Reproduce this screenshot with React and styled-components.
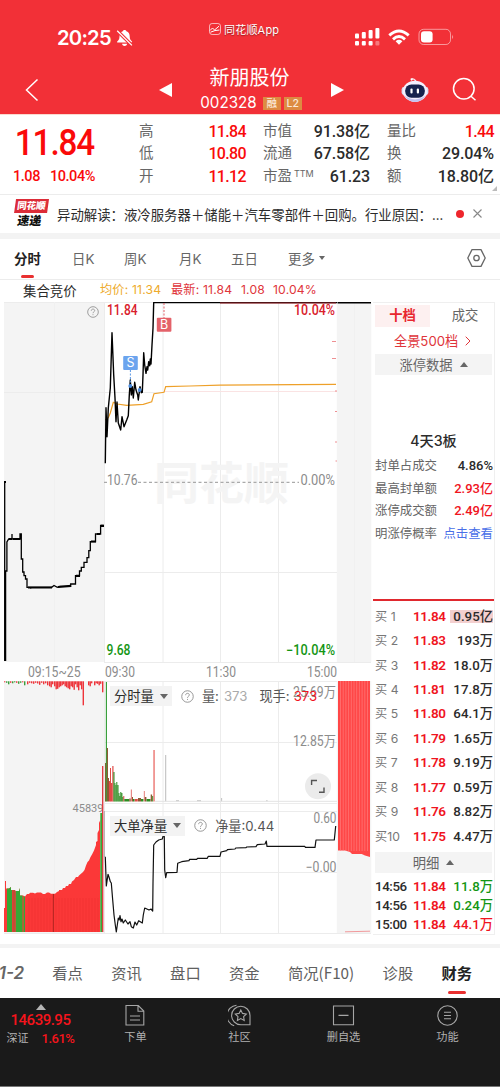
import styled, { createGlobalStyle, css } from "styled-components";

const COLORS = {
    brand: "#f23037",
    up: "#f0141e",
    down: "#149614",
    text: "#2b2b2b",
    label: "#666",
    muted: "#8c8c8c",
    panel: "#f4f4f4",
    line: "#ececec",
    dark: "#1a1a1a",
};

const UI_FONT = `Inter, "Noto Sans CJK SC", sans-serif`;
const NUM_FONT = `Roboto, "Noto Sans CJK SC", sans-serif`;

const stats = [
    [{ label: "高", value: "11.84", up: true }, { label: "低", value: "10.80", up: true }, { label: "开", value: "11.12", up: true }],
    [{ label: "市值", value: "91.38亿" }, { label: "流通", value: "67.58亿" }, { label: "市盈", sup: "TTM", value: "61.23" }],
    [{ label: "量比", value: "1.44", up: true }, { label: "换", value: "29.04%" }, { label: "额", value: "18.80亿" }],
];

const periods = [
    { label: "分时", width: 27, gap: 31, active: true },
    { label: "日K", width: 23, gap: 29 },
    { label: "周K", width: 23, gap: 32 },
    { label: "月K", width: 23, gap: 29 },
    { label: "五日", width: 27, gap: 30 },
    { label: "更多", width: 38, gap: 0, more: true },
];

const limitData = [
    { label: "封单占成交", value: "4.86%", color: COLORS.text },
    { label: "最高封单额", value: "2.93亿", color: COLORS.up },
    { label: "涨停成交额", value: "2.49亿", color: COLORS.up },
    { label: "明涨停概率", value: "点击查看", color: "#4a6fe8", link: true },
];

const bids = [
    ["11.84", "0.95亿"],
    ["11.83", "193万"],
    ["11.82", "18.0万"],
    ["11.81", "17.8万"],
    ["11.80", "64.1万"],
    ["11.79", "1.65万"],
    ["11.78", "9.19万"],
    ["11.77", "0.59万"],
    ["11.76", "8.82万"],
    ["11.75", "4.47万"],
];

const trades = [
    ["14:56", "11.84", "11.8万", COLORS.down],
    ["14:56", "11.84", "0.24万", COLORS.down],
    ["15:00", "11.84", "44.1万", COLORS.up],
];

const sections = ["看点", "资讯", "盘口", "资金", "简况(F10)", "诊股", "财务"];

/* chart series, in the coordinates of the chart's viewBox */

const auctionPrice =
    "M4.7 482V661M5.6 661V571H6.9V542L8.7 539H12V534V539H20V534H21.3V559H22.7V572H24V575.7H25.5V579H27V587.3H30.7V588.5V587.3H51.7L54 585.5L57.3 587.3L60 586.3H70.7V584H75.5V575.7H79.5V571H81.3V567.3H84V562.3H87V557.7H88.8V550.7H90.3V541.7H95.5V540.7V534H100.6V525.5H103.7";

const price =
    "105.3,463.3 106,407.7 107,436.7 108.3,408 110.3,388 112,332.7 113.7,375 115,398 116,421.7 117,402 118.3,423 120.7,430 122,416.7 124,426.7 126.7,420 128.3,415.7 129.3,395 130.3,380 131.3,395 132.3,386.7 133.3,398 134.7,382.3 136,390 137.7,395 138.3,400 140,386.7 141.3,392.7 142.3,392.3 143,375 143.7,352.7 144.7,365 146,373.3 147,366.7 147.7,370 148.7,361.7 149.7,365.7 150.3,359 151,364 152,345 153,328.3 153.7,302.6 337,302.6";

const average =
    "105.3,420 108.3,417.7 110.3,413 113.3,402.3 117.3,404 126.7,405.3 143.3,404.3 151.7,401.7 154,393.7 164,392.3 165.7,386.6 190,386 220,385.2 336,384.4";

const netLine =
    "105.3,856.7 106.3,886 108,874.3 109.3,878 110.3,881.7 111.3,883 112.7,900 114,915 115.3,925 116.3,932 117.3,925 118.3,918 119.2,920 120,915.7 121,921.7 122,919 123.3,923 125.3,920 128,924 130,921.7 131.3,926.7 133.3,928 135,922 136.7,925 138.7,920.7 142.3,923 143.3,915 144.7,908 149,910 151,909 152.7,911 153,883 153.7,845 156,842 158.7,840 162.3,839 163.7,834 164.3,836.7 164.7,870 165.7,877.7 166.7,872.7 177,872.3 177.7,863.3 181.7,861.7 189,860.7 189.5,859.4 196.7,859.3 197.5,858.3 207.3,858.3 208.3,856.3 220,856.3 221,852 226.7,850.7 227.3,849.7 235,849 235.7,848 246,847.7 246.7,847 256,846.7 257.3,844.7 265,844 266.3,841 267,846.3 304.7,846.3 305.3,847.3 315,847.3 316,840 334.3,840 335.7,826";

// [x, top, color, width]
const volumeBars = [
    [105, 763, "#8a5b30", 1],
    [105.8, 682, "#3a9f3c", 1.2],
    [106.8, 748, "#8d5a33", 1.2],
    [108, 778, "#8d5a33", 1],
    [109, 781, "#e04a46", 1.2],
    [110, 768, "#e04a46", 1],
    [111, 783, "#e04a46", 1.4],
    [112.3, 766, "#e04a46", 1.2],
    [113.4, 772, "#2c8c20", 1.1],
    [114.4, 783, "#2c8c20", 1],
    [115.4, 785, "#2c8c20", 1],
    [116.3, 782, "#2c8c20", 1],
    [117.3, 785, "#2c8c20", 1.2],
    [118.4, 793, "#2c8c20", 1],
    [119.3, 796, "#2c8c20", 1.1],
    [120.3, 792, "#2c8c20", 1],
    [121.2, 793, "#2c8c20", 1.2],
    [122.3, 797, "#2c8c20", 1.1],
    [123.3, 796, "#e04a46", 1],
    [124.3, 799, "#2c8c20", 5],
    [129.3, 798.5, "#8d5a33", 1.5],
    [130.8, 789.5, "#e88a86", 1.2],
    [132, 797, "#8d5a33", 1],
    [133, 799, "#2c8c20", 1.6],
    [134.8, 799, "#e04a46", 3],
    [138, 798, "#8d5a33", 3],
    [141, 799, "#2c8c20", 2.5],
    [143.8, 791, "#e88a86", 1.1],
    [144.8, 797, "#8d5a33", 1.6],
    [146.5, 799, "#2c8c20", 4],
    [150.7, 794.5, "#8d5a33", 1.4],
    [152.2, 796, "#2c8c20", 1],
    [153.4, 750, "#ea6a66", 1.3],
    [165.2, 755, "#bbb", 1],
    [176, 800, "#ccc", 3],
    [197, 800, "#ccc", 4],
    [221.2, 798, "#bbb", 0.9],
    [266.4, 800, "#bbb", 1],
];

// unmatched auction volume, hanging from the top of the pane
const hangingBars = [
    [4, 1, 0], [6, 1.5, 1], [8, 3, 1], [10, 1.5, 0], [12, 2, 1], [14, 1, 1], [16, 1.5, 0], [18, 2.5, 1], [20, 1.5, 1],
    [22, 1, 0], [24, 4, 1], [27, 3, 0], [29, 1.5, 0], [31, 2, 0], [33, 2.5, 0], [35, 1.5, 0], [37, 2.2, 0], [39, 3.5, 0],
    [41, 1.5, 0], [43, 3, 0], [45, 2, 0], [47, 4, 0], [49, 5, 0], [50.5, 6, 0], [52, 3, 0], [54, 5, 0], [55.5, 8, 0],
    [57, 7.5, 0], [58.5, 6, 0], [60, 5, 0], [61.5, 4, 0], [63, 3, 0], [64.5, 5, 0], [66, 6, 0], [67.5, 7, 0],
    [69, 8, 0], [70.5, 5, 0], [72, 6, 0], [73.5, 8.5, 0], [75, 3, 0], [76.5, 6, 0], [78, 9, 0], [79.5, 4, 0],
    [81, 8, 0], [82.6, 24, 0], [88, 4, 0], [89.5, 5, 0], [91, 2, 0], [94, 4, 0], [95.5, 2, 0], [97, 2.5, 0],
    [98.5, 4, 0], [100, 2.5, 0], [102, 11, 0],
];

const matchedArea =
    "M4 932V908H5V881H6V888.5H9L11 887V890H15L16 891.5H19L20 888V895.5H23L25 896.5L27 894H29L30 892.7H33L35 893.5L37 892.5H41L43 894H45L47 892.5H49L51 893.8H55L57 892L59 891V890H62L63 888H65L66 886H68L69 884H71L72 881.5L74 880L76 877H78L79 875.5L83 872L84.5 870L86 865.5L87.5 862L89 860.5L90.5 857L92 854.5L94 850.5L96 845V842L97.5 841V833L99 830V823L100.3 820V932Z";

const repeat = (from, to, step) => {
    const list = [];
    for (let x = from; x < to; x += step) list.push(x);
    return list;
};

const HelpIcon = ({ size = 13 }) => (
    <svg width={size} height={size} viewBox="0 0 14 14" fill="none" stroke="#909090">
        <circle cx="7" cy="7" r="6.2" />
        <path d="M5 5.6C5 4.3 5.9 3.6 7 3.6S9 4.3 9 5.4C9 6.7 7 6.8 7 8.4" />
        <path d="M7 9.6V10.7" />
    </svg>
);

const ChartText = ({ x, y, w, size = 14, color = COLORS.muted, weight = 400, children }) => (
    <text x={x} y={y} textLength={w} lengthAdjust="spacingAndGlyphs" fontSize={size} fill={color} fontWeight={weight}>
        {children}
    </text>
);

const Marker = ({ x, y, color, children }) => (
    <g>
        <rect x={x} y={y} width="14.6" height="14" rx="1" fill={color} />
        <MarkerText x={x + 7.3} y={y + 11.4} textAnchor="middle">{children}</MarkerText>
    </g>
);

const Chart = () => (
    <ChartSvg viewBox="0 302 372 634" width="372" height="634">
        <rect x="4" y="302" width="100.5" height="360" fill="#f4f4f4" />
        <rect x="4" y="681" width="100.5" height="252" fill="#f4f4f4" />
        <rect x="336.8" y="302" width="34.5" height="360" fill="#f4f4f4" />
        <rect x="336.8" y="681" width="34.5" height="252" fill="#f4f4f4" />

        <g stroke={COLORS.line}>
            <path d="M104.5 302V662M163 302V662M220.5 302V662M278.5 302V662" />
            <path d="M104.5 681V933M163 681V933M220.5 681V933M278.5 681V933" />
            <path d="M4 392.5H163M4 302.5H371M104 572.5H337M104 662.5H371M104 681.5H337M104 742.5H337M104 803.5H337M104 811.5H337M104 872.5H337M4 933.5H371" />
        </g>
        <path d="M54.5 302V662M354.5 302V662M54.5 681V933" stroke="#f0f0f0" />
        <path d="M163 391.5H337" stroke="#fae3e3" />
        <Watermark x="154" y="500">同花顺</Watermark>
        <path d="M104 482.3H107M138 482.3H299" stroke="#aaa" strokeWidth="1.2" strokeDasharray="3 2.5" />

        <path d="M332 341.5H336M332 358.5H336M335 391H337M335 411.5H337M335 442H337M335.5 461H337" stroke="#ee8f92" />

        <path d={auctionPrice} fill="none" stroke="#000" strokeWidth="1.3" />
        <path d="M9 539H12M13 539H20M28 587.5H52M58 587L71 585.8M91 541.5H96M76 575.8H80M97 534H100M101 525.8H104M4 482H6" fill="none" stroke="#000" strokeWidth="2.2" />
        <polyline points={average} fill="none" stroke="#eea029" strokeWidth="1.2" />
        <polyline points={price} fill="none" stroke="#000" strokeWidth="1.4" strokeLinejoin="round" />
        <path d="M220 303H336" stroke="#a3262c" strokeWidth="1" />
        <path d="M337.5 302.6H371" stroke="#000" strokeWidth="2" />

        <path d="M164 303V318" stroke="#e4606a" strokeDasharray="2 1.5" />
        <path d="M130.4 370V384" stroke="#5a97e6" strokeDasharray="2 1.5" />
        <circle cx="130.3" cy="386" r="1.9" fill="#4b8de0" />
        <circle cx="139.6" cy="390" r="1.9" fill="#4b8de0" />
        <Marker x={156.8} y={317.7} color="#e4626a">B</Marker>
        <Marker x={123.2} y={356} color="#6ba4ee">S</Marker>

        <ChartText x="107" y="315.2" w="30.5" color="#d9202c" weight="500">11.84</ChartText>
        <ChartText x="294" y="315.2" w="41" color="#d9202c" weight="500">10.04%</ChartText>
        <ChartText x="107" y="485.3" w="30.5">10.76</ChartText>
        <ChartText x="300.5" y="485.3" w="34.5">0.00%</ChartText>
        <ChartText x="106.5" y="655" w="24" color={COLORS.down} weight="500">9.68</ChartText>
        <ChartText x="286" y="655" w="49" color={COLORS.down} weight="500">−10.04%</ChartText>
        <ChartText x="28" y="676.7" w="52.5">09:15~25</ChartText>
        <ChartText x="105" y="676.7" w="30">09:30</ChartText>
        <ChartText x="206" y="676.7" w="30">11:30</ChartText>
        <ChartText x="307" y="676.7" w="30">15:00</ChartText>

        {hangingBars.map(([x, h, sell]) => (
            <rect key={x} x={x} y="681.3" width="1.4" height={h} fill={sell ? "#3a9f3c" : "#ee343a"} />
        ))}
        {volumeBars.map(([x, top, color, w]) => (
            <rect key={x} x={x} y={top} width={w} height={801.5 - top} fill={color} />
        ))}
        <path d="M155 801.3H337" stroke="#e3e3e3" />

        <ChartText x="72.5" y="812" w="31" size="11.6">45839</ChartText>
        <path d={matchedArea} fill="#fb3838" />
        <g fill="#36a836">
            <path d="M7 888.5H9L11 887V890H12V932H7ZM15.7 891H19L20 888V895.5H22.5V932H15.7ZM23.6 896.5H25V932H23.6Z" />
            <rect x="100.3" y="813" width="1.8" height="119" />
        </g>
        <rect x="12.5" y="890" width="2.5" height="42" fill="#c84a35" />
        <path d="M53.4 894V932" stroke="#a3241f" />
        {repeat(29, 100, 3).map((x) => (
            <path key={x} d={`M${x} 898V932`} stroke="#e92e2e" strokeWidth="0.5" />
        ))}
        <path d="M102.7 766V932" stroke="#e2333a" strokeWidth="1.3" />

        <path d="M338 681H370V857L365 855.5L361.7 854H352L350 852L345 850.5H338Z" fill="#ff4747" />
        {repeat(340.5, 370, 2.7).map((x) => (
            <path key={x} d={`M${x} 681V851`} stroke="#ff8585" strokeWidth="0.6" />
        ))}
        <path d="M345 931.8L370 931.2" stroke="#f19a9c" />

        <path d="M104.3 811V857" stroke="#aaa" />
        <polyline points={netLine} fill="none" stroke="#111" strokeWidth="1.2" strokeLinejoin="round" />

        <ChartText x="293" y="696.7" w="43">25.69万</ChartText>
        <ChartText x="293" y="745.7" w="43">12.85万</ChartText>
        <ChartText x="313.5" y="822.7" w="23">0.60</ChartText>
        <ChartText x="305.5" y="872" w="31">−0.00</ChartText>

        <circle cx="318" cy="786.3" r="13" fill="#ebebeb" />
        <path d="M311.6 785V780.5H317M319 792.2H324V787.5" fill="none" stroke="#555" strokeWidth="1.4" />
    </ChartSvg>
);

const StatusIcons = () => (
    <svg width="100" height="22" viewBox="354 26 100 22" fill="#fff">
        <rect x="355" y="33.5" width="4" height="5" rx="1" />
        <rect x="361.8" y="32" width="4" height="6.5" rx="1" />
        <rect x="368.6" y="30" width="4" height="8.5" rx="1" />
        <rect x="375.4" y="28" width="4" height="10.5" rx="1" />
        <rect x="355" y="41" width="4" height="4.4" rx="1" />
        <rect x="361.8" y="41" width="4" height="4.4" rx="1" />
        <rect x="368.6" y="41" width="4" height="4.4" rx="1" />
        <rect x="375.4" y="41" width="4" height="4.4" rx="1" opacity="0.35" />
        <g fill="none" stroke="#fff" strokeWidth="2.9">
            <path d="M389.3 35.4Q399 26.6 408.7 35.4" />
            <path d="M393 39.3Q399 33.9 405 39.3" />
        </g>
        <path d="M395.6 41.2Q399 38.4 402.4 41.2L399 44.8Z" />
        <rect x="419" y="29.3" width="31.5" height="15.2" rx="4.6" fill="none" stroke="#fff" strokeOpacity="0.5" />
        <rect x="421" y="31.3" width="11.6" height="11.2" rx="3" />
        <path d="M452.2 34.6Q454 36.9 452.2 39.2Z" opacity="0.6" />
    </svg>
);

const BellOff = () => (
    <svg width="17" height="18" viewBox="0 0 17 18" fill="#fff">
        <path d="M8.6 1C9.7 1 10.2 1.6 10.4 2.3C12.8 3 13.7 5 13.7 7.4C13.7 10 14.6 11 16 12.5C16.3 13.2 16 13.6 15.3 13.6H1.8C1 13.6 .9 13 1.2 12.5C2.6 11 3.5 10 3.5 7.4C3.5 5 4.4 3 6.8 2.3C7 1.6 7.5 1 8.6 1Z" />
        <path d="M6 14.8H11.2C10.8 16.3 9.8 17 8.6 17S6.4 16.3 6 14.8Z" />
        <path d="M1.2 1.8L15.9 16.4" stroke={COLORS.brand} strokeWidth="3.4" />
        <path d="M1.2 1.8L15.9 16.4" stroke="#fff" strokeWidth="1.3" />
    </svg>
);

const Robot = () => (
    <svg width="28" height="26" viewBox="0 0 28 26">
        <path d="M10.5 3.4Q11 1 13 2.2L15 4" fill="none" stroke="#f6e5ef" strokeWidth="1.3" />
        <circle cx="10.6" cy="2.3" r="1.1" fill="#fff" />
        <rect x="0.6" y="10" width="5" height="8" rx="2.4" fill="#d8dcf5" />
        <rect x="22.4" y="10" width="5" height="8" rx="2.4" fill="#d8dcf5" />
        <ellipse cx="14" cy="14.3" rx="12.3" ry="10.6" fill="#f4efff" />
        <path d="M3.2 18Q7 24.9 14 24.9T24.8 18Q20 22.4 14 22.4T3.2 18Z" fill="#c3c1ee" />
        <rect x="4.2" y="7.4" width="19.6" height="13.4" rx="6.2" fill="#16224e" />
        <rect x="9.4" y="11.6" width="2.2" height="5" rx="1" fill="#fff" />
        <rect x="15.8" y="11.6" width="2.2" height="5" rx="1" fill="#fff" />
    </svg>
);

const toolbarItems = [
    {
        label: "下单",
        icon: <path d="M2 1.5H14.3L19.8 7V21H2ZM14 1.5V7.3H19.8M6 12H16M6 16H16" />,
    },
    {
        label: "社区",
        icon: (
            <>
                <path d="M22 11.5A9.2 9.2 0 1 0 12.8 20.7H22Z" />
                <path d="M8.5 1.2A10.6 10.6 0 0 0 6.2 21.8" />
                <path d="M12.8 6L14.5 9.4L18.3 10L15.6 12.6L16.2 16.4L12.8 14.6L9.4 16.4L10 12.6L7.3 10L11.1 9.4Z" />
            </>
        ),
    },
    {
        label: "删自选",
        icon: <path d="M1.5 2H21.5V20.8H1.5ZM6.5 11.4H16.5" />,
    },
    {
        label: "功能",
        icon: (
            <>
                <circle cx="11.5" cy="11.5" r="9.7" />
                <path d="M8 8.2H15M8 11.5H15M8 14.8H15" />
            </>
        ),
    },
];

export default function App() {
    return (
        <Page>
            <GlobalStyle />
            <Header>
                <StatusBar>
                    <Clock>20:25<BellOff /></Clock>
                    <AppName>
                        <svg width="12" height="12" viewBox="0 0 12 12" fill="none" stroke="#fff">
                            <rect x="0.5" y="0.5" width="11" height="11" rx="2.6" strokeWidth="0.8" opacity="0.8" />
                            <path d="M1 7.5L3.5 5L5.5 7L10 3.2M1.5 9.2Q6 7 10.5 7" />
                        </svg>
                        同花顺App
                    </AppName>
                    <StatusIcons />
                </StatusBar>
                <NavBar>
                    <svg width="14" height="24" viewBox="0 0 14 24" fill="none" stroke="#fff" strokeWidth="1.5">
                        <path d="M12.5 1.5L1.5 12L12.5 22.5" />
                    </svg>
                    <Arrow $dir="left" />
                    <Stock>
                        <StockName>新朋股份</StockName>
                        <StockCode>
                            002328
                            <Badge>融</Badge>
                            <Badge>L2</Badge>
                        </StockCode>
                    </Stock>
                    <Arrow $dir="right" />
                    <Robot />
                    <svg width="25" height="25" viewBox="0 0 25 25" fill="none" stroke="#fff" strokeWidth="1.5">
                        <circle cx="11.8" cy="11.8" r="10.3" />
                        <path d="M19 19.2L23.5 23.2" />
                    </svg>
                </NavBar>
            </Header>

            <Quote>
                <Latest>
                    <BigPrice>11.84</BigPrice>
                    <Change><span>1.08</span><span>10.04%</span></Change>
                </Latest>
                {stats.map((column) => (
                    <StatColumn key={column[0].label}>
                        {column.map((s) => (
                            <Stat key={s.label}>
                                <StatLabel>{s.label}{s.sup && <Sup>{s.sup}</Sup>}</StatLabel>
                                <StatValue $up={s.up}>{s.value}</StatValue>
                            </Stat>
                        ))}
                    </StatColumn>
                ))}
                <Corner />
            </Quote>

            <News>
                <NewsLogo>
                    <LogoTop>同花顺</LogoTop>
                    <LogoBottom>速递</LogoBottom>
                </NewsLogo>
                <NewsText>异动解读：液冷服务器＋储能＋汽车零部件＋回购。行业原因：...</NewsText>
                <Dot />
                <svg width="9" height="9" viewBox="0 0 9 9" stroke="#888" strokeWidth="1.1">
                    <path d="M0.5 0.5L8.5 8.5M8.5 0.5L0.5 8.5" />
                </svg>
            </News>

            <Periods>
                {periods.map((p) => (
                    <Period key={p.label} $active={p.active} $width={p.width} $gap={p.gap}>
                        {p.label}
                        {p.more && <Caret $size={3.5} />}
                    </Period>
                ))}
                <Settings width="19" height="20" viewBox="0 0 19 20" fill="none" stroke="#666" strokeWidth="1.3">
                    <path d="M5 1.6H14L18.2 10L14 18.4H5L.8 10Z" strokeLinejoin="round" />
                    <circle cx="9.5" cy="10" r="2.7" />
                </Settings>
            </Periods>

            <Legend>
                <Auction>集合竞价</Auction>
                <LegendItem $color="#eeab2d" $width={71}>均价: 11.34</LegendItem>
                <LegendItem $color="#e0353b" $width={70}>最新: 11.84</LegendItem>
                <LegendItem $color="#e0353b" $width={32}>1.08</LegendItem>
                <LegendItem $color="#e0353b">10.04%</LegendItem>
            </Legend>

            <Market>
                <ChartArea>
                    <Chart />
                    <AuctionHelp><HelpIcon size={12} /></AuctionHelp>
                    <Indicator $top={384}>
                        <IndicatorName>分时量<Caret /></IndicatorName>
                        <HelpIcon />
                        <IndicatorText $gap={8}>量:</IndicatorText>
                        <IndicatorText $color="#aaa" $gap={5}>373</IndicatorText>
                        <IndicatorText $gap={12}>现手:</IndicatorText>
                        <IndicatorText $color="#f0141e" $gap={4}>373</IndicatorText>
                    </Indicator>
                    <Indicator $top={513.5}>
                        <IndicatorName>大单净量<Caret /></IndicatorName>
                        <HelpIcon />
                        <IndicatorText $gap={8}>净量:0.44</IndicatorText>
                    </Indicator>
                </ChartArea>

                <Side>
                    <SideTabs>
                        <SideTab $active>十档</SideTab>
                        <SideTab>成交</SideTab>
                    </SideTabs>
                    <FullDepth>
                        全景500档
                        <svg width="6" height="10" viewBox="0 0 6 10" fill="none" stroke="#e0353b">
                            <path d="M0.7 0.7L5 5L0.7 9.3" />
                        </svg>
                    </FullDepth>
                    <Fold>涨停数据<Caret $up $size={4.3} /></Fold>
                    <Streak>4天3板</Streak>
                    <LimitRows>
                        {limitData.map((d) => (
                            <LimitRow key={d.label}>
                                <span>{d.label}</span>
                                <LimitValue $color={d.color} $link={d.link}>{d.value}</LimitValue>
                            </LimitRow>
                        ))}
                    </LimitRows>
                    <Bids>
                        {bids.map(([p, qty], i) => (
                            <BidRow key={p}>
                                <BidLabel>买{i < 9 ? " " : ""}{i + 1}</BidLabel>
                                <BidPrice>{p}</BidPrice>
                                <BidQty $marked={i === 0}>{qty}</BidQty>
                            </BidRow>
                        ))}
                    </Bids>
                    <Fold>明细<Caret $up $size={4.3} /></Fold>
                    <Trades>
                        {trades.map(([time, p, qty, color], i) => (
                            <TradeRow key={i}>
                                <TradeTime>{time}</TradeTime>
                                <BidPrice>{p}</BidPrice>
                                <TradeQty $color={color}>{qty}</TradeQty>
                            </TradeRow>
                        ))}
                    </Trades>
                </Side>
            </Market>

            <Sections>
                <Clipped>1-2</Clipped>
                {sections.map((s) => (
                    <Section key={s} $active={s === "财务"}>{s}</Section>
                ))}
            </Sections>

            <Toolbar>
                <IndexBox>
                    <Caret $up $size={5} $color="#b5b5b5" />
                    <IndexValue>14639.95</IndexValue>
                    <IndexRow><span>深证</span><IndexChange>1.61%</IndexChange></IndexRow>
                </IndexBox>
                {toolbarItems.map((t) => (
                    <ToolbarItem key={t.label}>
                        <svg width="23" height="23" viewBox="0 0 23 23" fill="none" stroke="#a6a6a6" strokeWidth="1.1">
                            {t.icon}
                        </svg>
                        {t.label}
                    </ToolbarItem>
                ))}
            </Toolbar>
        </Page>
    );
}

const GlobalStyle = createGlobalStyle`
    * {
        box-sizing: border-box;
    }
    body {
        margin: 0;
        background: #fff;
    }
    svg {
        flex-shrink: 0;
    }
`;

const Page = styled.div`
    width: 500px;
    height: 1087px;
    overflow: hidden;
    background: #fff;
    color: ${COLORS.text};
    font-family: ${UI_FONT};
    white-space: nowrap;
`;

const Header = styled.header`
    height: 115px;
    background: ${COLORS.brand};
    color: #fff;
    border-bottom: 1px solid #fbd9cf;
`;

const StatusBar = styled.div`
    display: grid;
    grid-template-columns: 152px 145px 100px;
    align-items: start;
    height: 60px;
    padding: 26px 0 0 57px;
`;

const Clock = styled.div`
    display: flex;
    align-items: center;
    gap: 5px;
    height: 23px;
    font-size: 20.2px;
    font-weight: 600;
    letter-spacing: -0.75px;
`;

const AppName = styled.div`
    display: flex;
    align-items: center;
    gap: 3px;
    height: 6px;
    font-size: 11px;
    letter-spacing: 0.2px;
    text-shadow: 0 1px 1px rgb(90 20 20 / 60%);
`;

const NavBar = styled.nav`
    display: grid;
    grid-template-columns: 134px 38px 134px 70px 51px 25px;
    align-items: center;
    height: 54px;
    padding: 4px 0 0 25px;
`;

const Arrow = styled.i`
    width: 0;
    height: 0;
    border: 7.5px solid transparent;
    ${({ $dir }) =>
        $dir === "left"
            ? css`
                  border-right: 13px solid #fff;
                  border-left: 0;
              `
            : css`
                  border-left: 13px solid #fff;
                  border-right: 0;
              `}
`;

const Stock = styled.div`
    width: 108px;
    display: flex;
    flex-direction: column;
    align-items: center;
`;

const StockName = styled.div`
    margin-right: 3px;
    padding-top: 1px;
    font-size: 20px;
    line-height: 26px;
`;

const StockCode = styled.div`
    display: flex;
    align-items: center;
    gap: 3px;
    font-size: 15.2px;
    line-height: 24px;
`;

const Badge = styled.span`
    width: 18px;
    height: 13px;
    background: #dd8b42;
    color: #fbe9da;
    font-size: 10.5px;
    font-weight: 500;
    line-height: 13px;
    text-align: center;

    &:first-of-type {
        margin-left: 3px;
    }
`;

const Quote = styled.section`
    position: relative;
    display: flex;
    gap: 17px;
    height: 80px;
    padding: 5px 6px 0 13px;
    border-bottom: 1px solid ${COLORS.line};
    font-family: ${NUM_FONT};
`;

const Latest = styled.div`
    width: 109px;
    color: #fa0a0a;
`;

const BigPrice = styled.div`
    padding: 2px 0 0 2px;
    font-size: 36.5px;
    font-weight: 500;
    line-height: 42px;
    letter-spacing: -1.2px;
    transform: scaleX(0.91);
    transform-origin: left;
`;

const Change = styled.div`
    display: flex;
    gap: 10px;
    padding-top: 3px;
    font-size: 14.5px;
    font-weight: 500;
    line-height: 20px;
    letter-spacing: -0.45px;
`;

const StatColumn = styled.div`
    width: 107px;
`;

const Stat = styled.div`
    display: flex;
    justify-content: space-between;
    height: 22.3px;
    line-height: 23px;
`;

const StatLabel = styled.span`
    display: flex;
    color: ${COLORS.label};
    font-size: 14.5px;
`;

const Sup = styled.span`
    padding-left: 2px;
    font-family: Inter, sans-serif;
    font-size: 9px;
    line-height: 17px;
`;

const StatValue = styled.span`
    font-size: 16px;
    font-weight: 500;
    letter-spacing: ${({ $up }) => ($up ? "-0.65px" : "-0.1px")};
    color: ${({ $up }) => ($up ? "#fa0a0a" : COLORS.text)};
`;

const Corner = styled.i`
    position: absolute;
    right: 3px;
    bottom: 3px;
    border-left: 5px solid transparent;
    border-bottom: 5px solid #bbb;
`;

const News = styled.section`
    display: flex;
    align-items: center;
    height: 44px;
    padding: 0 0 1px 14px;
    border-bottom: 6px solid #f3f3f3;
`;

const NewsLogo = styled.div`
    width: 33px;
    margin-right: 10px;
    transform: skewX(-8deg);
    text-align: center;
    font-weight: 900;
`;

const LogoTop = styled.div`
    height: 14px;
    background: #dc2c38;
    color: #fff;
    font-size: 9.5px;
    line-height: 13px;
`;

const LogoBottom = styled.div`
    height: 15px;
    color: #111;
    font-size: 12px;
    line-height: 15px;
`;

const NewsText = styled.div`
    width: 399px;
    font-family: "Noto Sans CJK SC", sans-serif;
    font-size: 13.4px;
    line-height: 18px;
`;

const Dot = styled.i`
    width: 8px;
    height: 8px;
    margin-right: 9px;
    border-radius: 50%;
    background: #ee262c;
`;

const Periods = styled.nav`
    display: flex;
    align-items: center;
    height: 41px;
    padding-left: 14px;
    border-bottom: 1px solid ${COLORS.line};
`;

const Period = styled.div`
    position: relative;
    display: flex;
    align-items: center;
    gap: 4px;
    width: ${({ $width }) => $width}px;
    height: 40px;
    margin-right: ${({ $gap }) => $gap}px;
    padding-bottom: 3px;
    font-size: 13.4px;
    color: ${({ $active }) => ($active ? "#222" : COLORS.label)};
    font-weight: ${({ $active }) => ($active ? 700 : 400)};

    ${({ $active }) =>
        $active &&
        css`
            &::after {
                content: "";
                position: absolute;
                left: 7px;
                bottom: 1px;
                width: 13px;
                height: 3px;
                border-radius: 2px;
                background: #e93030;
            }
        `}
`;

const Caret = styled.i`
    width: 0;
    height: 0;
    border: ${({ $size = 4 }) => $size}px solid transparent;
    ${({ $up, $size = 4, $color = "#666" }) =>
        $up
            ? `border-top: 0; border-bottom: ${$size * 1.3}px solid ${$color};`
            : `border-bottom: 0; border-top: ${$size * 1.4}px solid ${$color};`}
`;

const Settings = styled.svg`
    margin: 0 14px 3px auto;
`;

const Legend = styled.div`
    display: flex;
    align-items: center;
    height: 22px;
    padding: 0 0 1px 23px;
    line-height: 18px;
`;

const Auction = styled.span`
    width: 77px;
    padding-top: 1px;
    font-size: 13.4px;
`;

const LegendItem = styled.span`
    width: ${({ $width }) => ($width ? `${$width}px` : "auto")};
    padding-bottom: 1px;
    color: ${({ $color }) => $color};
    font-size: 12.2px;
    letter-spacing: 0.15px;
`;

const Market = styled.main`
    display: flex;
    gap: 1px;
    height: 642px;
`;

const ChartArea = styled.div`
    position: relative;
    width: 372px;
`;

const ChartSvg = styled.svg`
    display: block;
    font-family: ${NUM_FONT};
`;

const MarkerText = styled.text`
    font-family: Inter, sans-serif;
    font-size: 12.5px;
    fill: #fff;
`;

const Watermark = styled.text`
    font-family: "Noto Sans CJK SC", sans-serif;
    font-size: 45px;
    font-weight: 700;
    fill: #f4f4f4;
`;

const AuctionHelp = styled.div`
    position: absolute;
    top: 4px;
    left: 86.5px;
    line-height: 0;
`;

const Indicator = styled.div`
    position: absolute;
    top: ${({ $top }) => $top}px;
    left: 110px;
    display: flex;
    align-items: center;
    height: 20px;
    line-height: 18px;
`;

const IndicatorName = styled.div`
    display: flex;
    align-items: center;
    gap: 6px;
    height: 20px;
    margin-right: 9px;
    padding: 0 4px;
    background: #f3f3f3;
    font-size: 13.3px;
`;

const IndicatorText = styled.span`
    margin-left: ${({ $gap }) => $gap}px;
    color: ${({ $color = "#555" }) => $color};
    font-size: 13.2px;
`;

const Side = styled.aside`
    width: 122px;
    height: 633px;
    border: 1px solid #efefef;
    border-width: 1px 1px 1px 0;
    font-family: ${NUM_FONT};
`;

const SideTabs = styled.div`
    display: flex;
    height: 25px;
    padding: 2px 0 0 2px;
`;

const SideTab = styled.div`
    width: ${({ $active }) => ($active ? 55 : 64)}px;
    height: 22px;
    padding-left: ${({ $active }) => ($active ? 0 : 6)}px;
    background: ${({ $active }) => ($active ? "#fdf0f0" : "none")};
    color: ${({ $active }) => ($active ? "#e8262e" : COLORS.label)};
    font-size: 13.3px;
    font-weight: ${({ $active }) => ($active ? 700 : 400)};
    line-height: 22px;
    text-align: center;
`;

const FullDepth = styled.div`
    display: flex;
    align-items: center;
    gap: 7px;
    height: 26px;
    padding: 0 0 1px 21px;
    color: #e0353b;
    font-family: ${UI_FONT};
    font-size: 13.2px;
    line-height: 18px;
`;

const Fold = styled.div`
    display: flex;
    justify-content: center;
    align-items: center;
    gap: 7px;
    height: 21px;
    margin: 0 2px;
    background: #f4f4f4;
    color: ${COLORS.label};
    font-size: 13.3px;
`;

const Streak = styled.div`
    padding: 56px 0 0;
    font-family: ${UI_FONT};
    font-size: 14.2px;
    font-weight: 500;
    line-height: 20px;
    text-align: center;
`;

const LimitRows = styled.div`
    height: 150px;
    padding: 4px 1px 0 2px;
    border-bottom: 2px solid #e0282e;
`;

const LimitRow = styled.div`
    display: flex;
    justify-content: space-between;
    height: 22.7px;
    color: ${COLORS.label};
    font-size: 12.4px;
    line-height: 22px;
`;

const LimitValue = styled.span`
    color: ${({ $color }) => $color};
    font-size: ${({ $link }) => ($link ? 12.4 : 13)}px;
    font-weight: ${({ $link }) => ($link ? 400 : 500)};
`;

const Bids = styled.div`
    height: 251px;
    padding: 3px 1px 0 2px;
`;

const BidRow = styled.div`
    display: grid;
    grid-template-columns: 38px 1fr auto;
    align-items: center;
    height: 24.45px;
    line-height: 13px;
`;

const BidLabel = styled.span`
    color: #777;
    font-family: ${UI_FONT};
    font-size: 12.2px;
`;

const BidPrice = styled.span`
    color: ${COLORS.up};
    font-size: 13.5px;
    font-weight: 600;
    letter-spacing: -0.45px;
`;

const BidQty = styled.span`
    padding-left: 3px;
    background: ${({ $marked }) => ($marked ? "#f3cfcf" : "none")};
    font-size: 13.3px;
    font-weight: 500;
`;

const Trades = styled.div`
    padding: 4px 1px 0 2px;
`;

const TradeRow = styled(BidRow)`
    height: 19.2px;
`;

const TradeTime = styled.span`
    font-size: 13.3px;
    font-weight: 500;
    letter-spacing: -0.4px;
`;

const TradeQty = styled(BidQty)`
    color: ${({ $color }) => $color};
`;

const Sections = styled.nav`
    display: flex;
    align-items: center;
    gap: 28.3px;
    height: 54px;
    border-top: 4px solid #f3f3f3;
`;

const Clipped = styled.span`
    width: 24px;
    color: ${COLORS.label};
    font-size: 17px;
    font-style: italic;
    font-weight: 600;
    direction: rtl;
`;

const Section = styled.div`
    position: relative;
    height: 50px;
    color: ${({ $active }) => ($active ? "#222" : "#606060")};
    font-family: "Noto Sans CJK SC", sans-serif;
    font-size: 15.3px;
    font-weight: ${({ $active }) => ($active ? 700 : 400)};
    line-height: 49px;

    ${({ $active }) =>
        $active &&
        css`
            &::after {
                content: "";
                position: absolute;
                left: 7px;
                bottom: 4px;
                width: 18px;
                height: 3px;
                border-radius: 2px;
                background: #e93030;
            }
        `}
`;

const Toolbar = styled.footer`
    display: flex;
    height: 89px;
    padding-top: 5px;
    background: ${COLORS.dark};
    border-bottom: 1px solid #777;
`;

const IndexBox = styled.div`
    display: flex;
    flex-direction: column;
    align-items: center;
    width: 83px;
    padding: 1px 2px 0 0;
`;

const IndexValue = styled.div`
    color: #f5141c;
    font-family: ${NUM_FONT};
    font-size: 15px;
    font-weight: 500;
    line-height: 20px;
    letter-spacing: -0.5px;
`;

const IndexRow = styled.div`
    display: flex;
    gap: 13px;
    color: #b5b5b5;
    font-size: 11px;
    line-height: 17px;
`;

const IndexChange = styled.span`
    color: #f5141c;
    font-family: ${NUM_FONT};
    font-size: 13px;
    font-weight: 500;
    letter-spacing: -0.5px;
`;

const ToolbarItem = styled.div`
    display: flex;
    flex-direction: column;
    align-items: center;
    gap: 1px;
    width: 104px;
    padding: 1px 0 0 1px;
    color: #b0b0b0;
    font-size: 11.2px;
    line-height: 18px;
`;
